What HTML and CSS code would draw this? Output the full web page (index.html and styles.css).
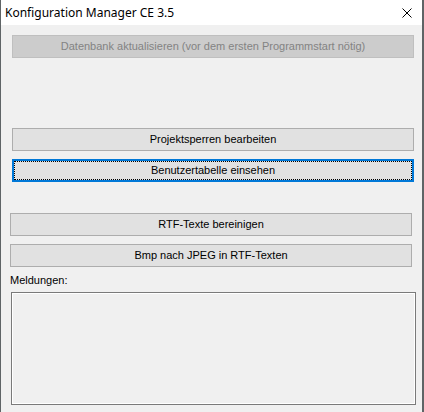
FILE: index.html
```html
<!DOCTYPE html>
<html lang="de">
<head>
<meta charset="UTF-8">
<title>Konfiguration Manager CE 3.5</title>
<link rel="stylesheet" href="styles.css">
</head>
<body>
<div class="window">
  <div class="titlebar">
    <span class="title">Konfiguration Manager CE 3.5</span>
    <svg class="close" width="10" height="10" viewBox="0 0 10 10"><path d="M0.5 0.5 L9.5 9.5 M9.5 0.5 L0.5 9.5" stroke="#000" stroke-width="1" fill="none"/></svg>
  </div>
  <div class="content">
    <button class="btn btn-wide disabled" disabled>Datenbank aktualisieren (vor dem ersten Programmstart nötig)</button>
    <button class="btn btn-wide btn-locks">Projektsperren bearbeiten</button>
    <button class="btn btn-wide focused">Benutzertabelle einsehen</button>
    <button class="btn btn-rtf">RTF-Texte bereinigen</button>
    <button class="btn btn-bmp">Bmp nach JPEG in RTF-Texten</button>
    <div class="label">Meldungen:</div>
    <div class="log"></div>
  </div>
</div>
</body>
</html>
```

FILE: styles.css
```css
:root {
  --face: #f0f0f0; --btn: #e1e1e1; --btn-border: #adadad;
  --disabled: #cccccc; --disabled-border: #bfbfbf; --disabled-text: #838383;
  --focus: #0078d7; --desk: #5f6466;
}
* { box-sizing: border-box; margin: 0; padding: 0; }
body { background: var(--desk); width: 424px; height: 412px; overflow: hidden; font-family: 'Liberation Sans', Arial, sans-serif; font-size: 11px; color: #000; }

.window { margin-left: 1px; width: 421px; height: 412px; background: var(--face); }
.titlebar { height: 25px; background: #fff; display: flex; align-items: center; justify-content: space-between; padding: 0 10px 0 4px; }
.title { font-family: 'Noto Sans', 'Open Sans', sans-serif; font-size: 12px; padding-bottom: 1px; }
.close { margin-top: 1px; }

.content { display: flex; flex-direction: column; padding: 10px 0 0 9px; }
.btn { height: 23px; width: 402px; border: 1px solid var(--btn-border); background: var(--btn); font-family: 'Liberation Sans', Arial, sans-serif; font-size: 11px; color: #000; display: flex; align-items: center; justify-content: center; padding-bottom: 1px; }
.btn-wide { margin-left: 2px; }
.disabled { background: var(--disabled); border-color: var(--disabled-border); color: var(--disabled-text); }
.btn-locks { margin-top: 70px; }
.focused { margin-top: 8px; border: 2px solid var(--focus); position: relative; }
.focused::before { content: ''; position: absolute; inset: 0; border: 1px dotted #000; }
.btn-rtf { margin-top: 31px; }
.btn-bmp { margin-top: 8px; }
.label { margin-top: 6px; height: 19px; line-height: 14px; }
.log { margin-left: 1px; width: 405px; height: 113px; border: 1px solid #7a7a7a; box-shadow: inset 0 0 0 1px #fff; background: var(--face); }
```
